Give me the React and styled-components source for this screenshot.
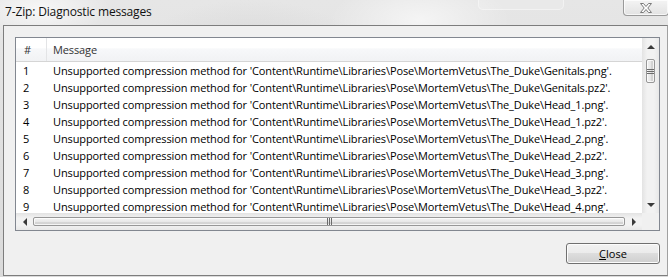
import styled, { createGlobalStyle } from "styled-components";

const GlobalStyle = createGlobalStyle`
  html, body { margin: 0; padding: 0; }
  body { width: 668px; height: 277px; overflow: hidden; font-family: "Open Sans", "Liberation Sans", sans-serif; }
`;

const rows = [
  "Genitals.png",
  "Genitals.pz2",
  "Head_1.png",
  "Head_1.pz2",
  "Head_2.png",
  "Head_2.pz2",
  "Head_3.png",
  "Head_3.pz2",
  "Head_4.png",
];

const Window = styled.div`
  width: 668px;
  height: 277px;
  display: flex;
  flex-direction: column;
  background:
    radial-gradient(ellipse 70px 30px at 40px 10px, rgba(255,255,255,0.7), rgba(255,255,255,0) 100%),
    radial-gradient(ellipse 90px 40px at 420px 20px, rgba(255,255,255,0.6), rgba(255,255,255,0) 100%),
    radial-gradient(ellipse 120px 60px at 250px 60px, rgba(200,200,200,0.5), rgba(200,200,200,0) 100%),
    linear-gradient(to bottom, #e6e6e6, #dadada);
`;

const TitleBar = styled.div`
  height: 25px;
  display: flex;
  justify-content: space-between;
  align-items: flex-start;
  padding-left: 5px;
  position: relative;
`;

const Title = styled.span`
  font-family: "Open Sans", "Liberation Sans", sans-serif;
  font-size: 12px;
  letter-spacing: -0.15px;
  color: #111;
  line-height: 14px;
  margin-top: 5px;
`;

const Reflection = styled.div`
  position: absolute;
  left: 478px;
  top: -6px;
  width: 84px;
  height: 14px;
  border-radius: 5px;
  border: 1px solid rgba(255,255,255,0.4);
  background: rgba(255,255,255,0.15);
`;

const CloseBox = styled.div`
  width: 44px;
  height: 15px;
  margin-right: -1px;
  border: 1px solid #9a9a9a;
  border-top: none;
  border-radius: 0 0 4px 4px;
  background: linear-gradient(to bottom, #f4f4f4, #e2e2e2);
  box-shadow: inset 0 0 0 1px rgba(255,255,255,0.7);
  display: flex;
  align-items: center;
  justify-content: center;
`;

const Client = styled.div`
  flex: 1;
  margin: 0 0 1px 3px;
  border: 1px solid #7d7d7d;
  border-right-color: #a0a0a0;
  background: #f0f0f0;
  padding: 11px 7px 10px 11px;
  display: flex;
  flex-direction: column;
  gap: 12px;
`;

const ListView = styled.div`
  height: 194px;
  box-sizing: border-box;
  border: 1px solid #828790;
  background: #fff;
  display: grid;
  grid-template-columns: 1fr 17px;
  grid-template-rows: 1fr 17px;
  overflow: hidden;
`;

const Content = styled.div`
  overflow: hidden;
  font-family: "Open Sans", "Liberation Sans", sans-serif;
  font-size: 11px;
  letter-spacing: -0.12px;
  color: #000;
`;

const Header = styled.div`
  height: 23px;
  display: flex;
  border-bottom: 1px solid #d5d5d5;
  background: linear-gradient(to bottom, #ffffff 0%, #ffffff 45%, #f7f8fa 46%, #f1f2f4 100%);
`;

const HeadCell = styled.div`
  width: ${(p) => p.$w || "auto"};
  flex: ${(p) => (p.$w ? "none" : 1)};
  box-sizing: border-box;
  padding-left: ${(p) => p.$pad}px;
  display: flex;
  align-items: center;
  border-right: ${(p) => (p.$w ? "1px solid #e3e4e6" : "none")};
  color: #333;
`;

const Row = styled.div`
  height: 17px;
  display: flex;
  align-items: center;
  white-space: nowrap;
`;

const Cell = styled.div`
  width: ${(p) => p.$w || "auto"};
  flex: none;
  box-sizing: border-box;
  padding-left: ${(p) => p.$pad}px;
`;

const VScroll = styled.div`
  background: linear-gradient(to right, #e3e3e3, #f2f2f2 30%, #f2f2f2 70%, #e8e8e8);
  display: flex;
  flex-direction: column;
  align-items: center;
`;

const HScroll = styled.div`
  background: linear-gradient(to bottom, #e3e3e3, #f2f2f2 30%, #f2f2f2 70%, #e8e8e8);
  display: flex;
  align-items: center;
`;

const Corner = styled.div`
  background: #f0f0f0;
`;

const Arrow = styled.div`
  width: 17px;
  height: 17px;
  flex: none;
  display: flex;
  align-items: center;
  justify-content: center;
`;

const Track = styled.div`
  flex: 1;
  display: flex;
  flex-direction: ${(p) => (p.$v ? "column" : "row")};
  align-items: stretch;
`;

const Thumb = styled.div`
  box-sizing: border-box;
  ${(p) =>
    p.$v
      ? `height: 24px; margin: 4px 1px 0 1px;
         background: linear-gradient(to right, #f2f2f2, #e6e6e6 50%, #d6d6d6 51%, #cfcfcf);`
      : `flex: 1; margin: 1px 0;
         background: linear-gradient(to bottom, #f4f4f4, #e8e8e8 50%, #d8d8d8 51%, #d0d0d0);`}
  border: 1px solid #979797;
  border-radius: 2px;
  box-shadow: inset 0 0 0 1px rgba(255,255,255,0.75);
  display: flex;
  align-items: center;
  justify-content: center;
`;

const Footer = styled.div`
  display: flex;
  justify-content: flex-end;
`;

const Button = styled.button`
  width: 94px;
  height: 21px;
  padding: 0;
  border: 1px solid #707070;
  border-radius: 3px;
  background: linear-gradient(to bottom, #f2f2f2 0%, #ebebeb 49%, #dddddd 50%, #cfcfcf 100%);
  box-shadow: inset 0 0 0 1px #fcfcfc;
  font-family: "Open Sans", "Liberation Sans", sans-serif;
  font-size: 11px;
  color: #000;
  line-height: 17px;
  u { text-decoration: underline; }
`;

function Tri({ dir }) {
  const pts = {
    up: "0,4 4,0 8,4",
    down: "0,0 8,0 4,4",
    left: "4,0 4,8 0,4",
    right: "0,0 0,8 4,4",
  }[dir];
  const vertical = dir === "up" || dir === "down";
  return (
    <svg width={vertical ? 8 : 4} height={vertical ? 4 : 8} viewBox={vertical ? "0 0 8 4" : "0 0 4 8"}>
      <polygon points={pts} fill="#3a3a3a" />
    </svg>
  );
}

function Grip({ v }) {
  return v ? (
    <svg width="7" height="7" viewBox="0 0 7 7">
      {[1, 3, 5].map((y) => (
        <line key={y} x1="0" x2="7" y1={y + 0.5} y2={y + 0.5} stroke="#6b6b6b" />
      ))}
    </svg>
  ) : (
    <svg width="7" height="7" viewBox="0 0 7 7">
      {[1, 3, 5].map((x) => (
        <line key={x} y1="0" y2="7" x1={x + 0.5} x2={x + 0.5} stroke="#6b6b6b" />
      ))}
    </svg>
  );
}

export default function App() {
  return (
    <>
      <GlobalStyle />
      <Window>
        <TitleBar>
          <Title>7-Zip: Diagnostic messages</Title>
          <Reflection />
          <CloseBox>
            <svg width="14" height="12" viewBox="0 0 14 12">
              <path
                d="M1.5 1.5 H4.5 L7 4.5 L9.5 1.5 H12.5 L8.8 6 L12.5 10.5 H9.5 L7 7.5 L4.5 10.5 H1.5 L5.2 6 Z"
                fill="#ffffff"
                stroke="#7b7b7b"
                strokeWidth="1"
                strokeLinejoin="round"
              />
            </svg>
          </CloseBox>
        </TitleBar>
        <Client>
          <ListView>
            <Content>
              <Header>
                <HeadCell $w="31px" $pad={8}>#</HeadCell>
                <HeadCell $pad={6}>Message</HeadCell>
              </Header>
              {rows.map((file, i) => (
                <Row key={i}>
                  <Cell $w="31px" $pad={7}>{i + 1}</Cell>
                  <Cell $pad={6}>
                    Unsupported compression method for 'Content\Runtime\Libraries\Pose\MortemVetus\The_Duke\{file}'.
                  </Cell>
                </Row>
              ))}
            </Content>
            <VScroll>
              <Arrow><Tri dir="up" /></Arrow>
              <Track $v>
                <Thumb $v><Grip v /></Thumb>
              </Track>
              <Arrow><Tri dir="down" /></Arrow>
            </VScroll>
            <HScroll>
              <Arrow><Tri dir="left" /></Arrow>
              <Track>
                <Thumb><Grip /></Thumb>
              </Track>
              <Arrow><Tri dir="right" /></Arrow>
            </HScroll>
            <Corner />
          </ListView>
          <Footer>
            <Button><u>C</u>lose</Button>
          </Footer>
        </Client>
      </Window>
    </>
  );
}
